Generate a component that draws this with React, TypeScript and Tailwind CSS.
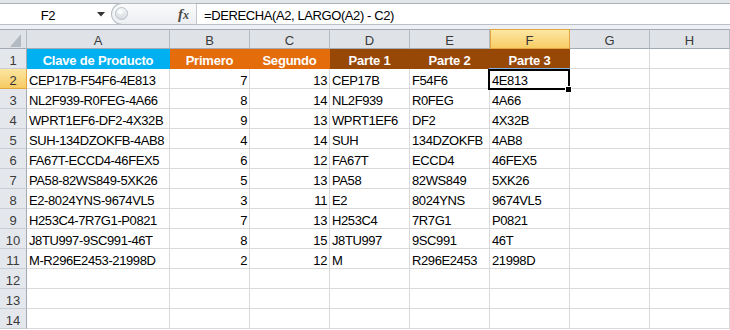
import React from "react";

const COLS = ["A", "B", "C", "D", "E", "F", "G", "H"];

const DATA: [string, number, number, string, string, string][] = [
  ["CEP17B-F54F6-4E813", 7, 13, "CEP17B", "F54F6", "4E813"],
  ["NL2F939-R0FEG-4A66", 8, 14, "NL2F939", "R0FEG", "4A66"],
  ["WPRT1EF6-DF2-4X32B", 9, 13, "WPRT1EF6", "DF2", "4X32B"],
  ["SUH-134DZOKFB-4AB8", 4, 14, "SUH", "134DZOKFB", "4AB8"],
  ["FA67T-ECCD4-46FEX5", 6, 12, "FA67T", "ECCD4", "46FEX5"],
  ["PA58-82WS849-5XK26", 5, 13, "PA58", "82WS849", "5XK26"],
  ["E2-8024YNS-9674VL5", 3, 11, "E2", "8024YNS", "9674VL5"],
  ["H253C4-7R7G1-P0821", 7, 13, "H253C4", "7R7G1", "P0821"],
  ["J8TU997-9SC991-46T", 8, 15, "J8TU997", "9SC991", "46T"],
  ["M-R296E2453-21998D", 2, 12, "M", "R296E2453", "21998D"],
];

const HEAD: { t: string; bg: string; bc: string }[] = [
  { t: "Clave de Producto", bg: "bg-[#00b0f0]", bc: "border-[#00b0f0]" },
  { t: "Primero", bg: "bg-[#e46c0a]", bc: "border-[#e46c0a]" },
  { t: "Segundo", bg: "bg-[#e46c0a]", bc: "border-[#e46c0a]" },
  { t: "Parte 1", bg: "bg-[#974706]", bc: "border-[#974706]" },
  { t: "Parte 2", bg: "bg-[#974706]", bc: "border-[#974706]" },
  { t: "Parte 3", bg: "bg-[#974706]", bc: "border-[#974706]" },
];

function RowHeader({ n }: { n: number }) {
  const sel = n === 2;
  return (
    <div
      className={
        "h-[20px] flex items-end justify-center border-r border-b text-[13px] leading-[15px] " +
        (sel
          ? "bg-gradient-to-b from-[#fce6a0] to-[#f6ca62] border-[#e2a541] text-[#333]"
          : "bg-[#e4e8ed] border-r-[#a3aab3] border-b-[#c9ced4] text-[#3a3a3a]")
      }
    >
      {n}
    </div>
  );
}

function Cell({
  children,
  right,
}: {
  children?: React.ReactNode;
  right?: boolean;
}) {
  return (
    <div
      className={
        "h-[20px] flex items-end border-r border-b border-[#dadada] bg-white text-black text-[13px] leading-[15px] tracking-[-0.4px] whitespace-nowrap overflow-hidden " +
        (right ? "justify-end pr-[2px]" : "pl-[2px]")
      }
    >
      {children}
    </div>
  );
}

export default function App() {
  return (
    <div
      className="w-[730px] h-[330px] bg-white overflow-hidden relative"
      style={{ fontFamily: '"Liberation Sans", Arial, sans-serif' }}
    >
      {/* formula bar */}
      <div className="h-[3px] bg-[#e2e6eb]" />
      <div className="h-px bg-[#a9b1bb]" />
      <div className="h-[20px] flex bg-white">
        <div className="w-[111px] relative flex items-center">
          <div className="w-[96px] text-center text-[13px] tracking-[-0.4px] text-black leading-[15px] pt-[2px]">
            F2
          </div>
          <svg
            className="absolute left-[97px] top-[8px]"
            width="8"
            height="5"
            viewBox="0 0 8 5"
          >
            <polygon points="0,0 8,0 4,4.5" fill="#333" />
          </svg>
        </div>
        <div className="w-[85px] relative flex items-center rounded-l-[11px] border border-r-0 border-[#b7bdc5] bg-gradient-to-b from-[#fbfbfc] to-[#eceef1] -my-px">
          <div className="absolute left-[3px] top-[3px] w-[13px] h-[13px] rounded-full border border-[#b9bfc6] bg-gradient-to-b from-[#f4f5f7] to-[#d9dde2]">
            <div className="absolute left-[2px] top-[2px] w-[5px] h-[4px] rounded-full bg-white/80" />
          </div>
          <div
            className="absolute left-[66px] top-[1px] text-[15px] italic font-bold text-[#4a4a4a] leading-[18px]"
            style={{ fontFamily: '"Liberation Serif", "Times New Roman", serif' }}
          >
            f<span className="text-[12px]">x</span>
          </div>
        </div>
        <div className="flex-1 border-l border-[#c4c9cf] flex items-center pl-[7px] text-[13px] leading-[15px] tracking-[-0.4px] text-black pt-[2px] whitespace-nowrap">
          =DERECHA(A2, LARGO(A2) - C2)
        </div>
      </div>
      <div className="h-px bg-[#b9c0c8]" />
      <div className="h-[4px] bg-[#eef0f3]" />

      {/* grid */}
      <div className="grid grid-cols-[27px_143px_repeat(7,80px)]">
        {/* column headers */}
        <div className="h-[20px] relative bg-[#dfe3e8] border-t border-b border-r border-t-[#a3aab3] border-b-[#a3aab3] border-r-[#b3bac2]">
          <svg
            className="absolute left-[10px] top-[4px]"
            width="12"
            height="13"
            viewBox="0 0 12 13"
          >
            <polygon points="11,0 11,13 0,13" fill="#b4bac2" />
          </svg>
        </div>
        {COLS.map((c) => {
          const sel = c === "F";
          return (
            <div
              key={c}
              className={
                "h-[20px] flex items-end justify-center border-t border-b border-r text-[13px] leading-[15px] " +
                (sel
                  ? "bg-gradient-to-b from-[#fde7a2] to-[#f7cc63] border-[#e2a541] text-[#333] shadow-[inset_1px_0_0_#e2a541]"
                  : "bg-[#dfe3e8] border-t-[#a3aab3] border-b-[#a3aab3] border-r-[#b3bac2] text-[#3a3a3a]")
              }
            >
              {c}
            </div>
          );
        })}

        {/* row 1 */}
        <RowHeader n={1} />
        {HEAD.map((h) => (
          <div
            key={h.t}
            className={
              "h-[20px] flex items-end justify-center border-r border-b text-white font-bold text-[13px] leading-[15px] tracking-[-0.2px] whitespace-nowrap " +
              h.bg +
              " " +
              h.bc
            }
          >
            {h.t}
          </div>
        ))}
        <Cell />
        <Cell />

        {/* data rows */}
        {DATA.map((r, i) => (
          <React.Fragment key={i}>
            <RowHeader n={i + 2} />
            <Cell>{r[0]}</Cell>
            <Cell right>{r[1]}</Cell>
            <Cell right>{r[2]}</Cell>
            <Cell>{r[3]}</Cell>
            <Cell>{r[4]}</Cell>
            <Cell>{r[5]}</Cell>
            <Cell />
            <Cell />
          </React.Fragment>
        ))}

        {[12, 13, 14].map((n) => (
          <React.Fragment key={n}>
            <RowHeader n={n} />
            {COLS.map((c) => (
              <Cell key={c} />
            ))}
          </React.Fragment>
        ))}
      </div>

      {/* selection overlay */}
      <div className="absolute left-[489px] top-[68px] w-[81px] h-px bg-[#7fb2e2]" />
      <div className="absolute left-[488px] top-[69px] w-[82px] h-[21px] border-2 border-black pointer-events-none" />
      <div className="absolute left-[565px] top-[86px] w-[7px] h-[7px] bg-black border border-white" />
    </div>
  );
}
